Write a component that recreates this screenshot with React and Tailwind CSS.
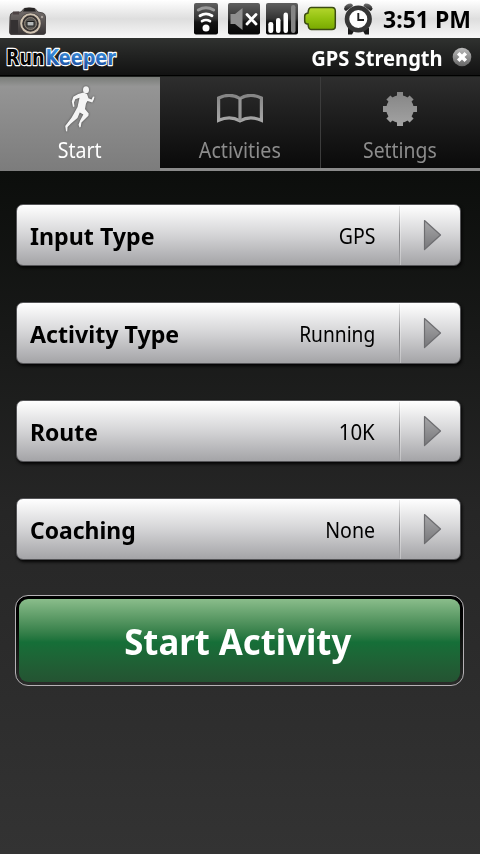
import React from "react";

function Camera() {
  return (
    <svg width="38" height="28" viewBox="0 0 38 28">
      <defs>
        <linearGradient id="cam" x1="0" y1="0" x2="0" y2="1">
          <stop offset="0" stopColor="#77716f" />
          <stop offset="0.5" stopColor="#5b5655" />
          <stop offset="1" stopColor="#383435" />
        </linearGradient>
      </defs>
      <path d="M1 10Q1 6 4 5.500L12 5L15 1.500Q20 0 26 1.500L29 5L34 6Q36.500 7 36.500 10V26Q36 27.500 34 27.500H2Q0.500 27 0.500 25Z" fill="url(#cam)" stroke="#3a3636" strokeWidth="0.8" />
      <path d="M16 1H25L27 4.500H14Z" fill="#252323" />
      <path d="M1.500 13H9V26.500H1.500Z" fill="#343132" />
      <path d="M4 4.500H10V7.500H4Z" fill="#4d4344" />
      <circle cx="21.500" cy="16.500" r="10.800" fill="#4a4544" />
      <circle cx="21.500" cy="16.500" r="9.300" fill="#353131" stroke="#cfc2b0" strokeWidth="2" />
      <circle cx="21.500" cy="16.500" r="6" fill="#5a5855" stroke="#8f8578" strokeWidth="1" />
      <rect x="18" y="14.500" width="7" height="4.500" fill="#b4b8b9" stroke="#1e1e1e" />
      <circle cx="33" cy="10" r="1.200" fill="#aaa29d" />
    </svg>
  );
}

function StatusIcons() {
  return (
    <svg width="184" height="38" viewBox="190 0 184 38">
      <defs>
        <linearGradient id="tile" x1="0" y1="0" x2="0" y2="1">
          <stop offset="0" stopColor="#606060" />
          <stop offset="0.5" stopColor="#333" />
          <stop offset="0.6" stopColor="#151515" />
          <stop offset="1" stopColor="#050505" />
        </linearGradient>
        <linearGradient id="bat" x1="0" y1="0" x2="0" y2="1">
          <stop offset="0" stopColor="#b4d62e" />
          <stop offset="0.5" stopColor="#93c210" />
          <stop offset="1" stopColor="#78a800" />
        </linearGradient>
        <linearGradient id="bell" x1="0" y1="0" x2="0" y2="1">
          <stop offset="0" stopColor="#707070" />
          <stop offset="1" stopColor="#171717" />
        </linearGradient>
      </defs>
      <rect x="194" y="3" width="24" height="31.500" rx="2" fill="url(#tile)" />
      <g fill="none" strokeLinecap="round">
        <path d="M198.300 10Q206 5.500 213.700 10" stroke="#999" strokeWidth="3" />
        <path d="M200 15.800Q206 12 212 15.800" stroke="#fff" strokeWidth="2.800" />
        <path d="M202 21.200Q206 18.700 210 21.200" stroke="#fff" strokeWidth="2.600" />
      </g>
      <circle cx="206" cy="28" r="3.500" fill="#fff" />
      <rect x="228" y="3" width="32" height="31.500" rx="2" fill="url(#tile)" />
      <path d="M230.500 14H235L242.500 8V30L235 24H230.500Z" fill="#8f8f8f" />
      <path d="M247 14.500L256 24M256 14.500L247 24" stroke="#fff" strokeWidth="2.800" strokeLinecap="round" />
      <rect x="266" y="3" width="32" height="31.500" rx="2" fill="url(#tile)" />
      <rect x="268.300" y="22" width="5" height="11" rx="2.300" fill="#fff" />
      <rect x="276" y="18" width="4.500" height="15" rx="2.200" fill="#fff" />
      <rect x="283.500" y="12.500" width="4.500" height="20.500" rx="2.200" fill="#fff" />
      <rect x="291" y="5" width="4.500" height="28" rx="2.200" fill="#858585" />
      <path d="M311 7.500H332Q335.300 7.500 335.300 11V26.500Q335.300 29.500 332 29.500H311Q308.500 29.500 308 24H307Q304.700 23.500 304.700 21V16Q304.700 13.500 308 13Q308.500 7.500 311 7.500Z" fill="url(#bat)" stroke="#3c4c12" strokeWidth="1.500" />
      <g fill="url(#bell)">
        <path d="M344 8.500Q345.500 3.500 351 3.500Q353 4 353 6L346 11Q344 10 344 8.500Z" />
        <path d="M372.500 8.500Q371 3.500 365.500 3.500Q363.500 4 363.500 6L370.500 11Q372.500 10 372.500 8.500Z" />
        <path d="M348 28H369V34.500H365L363 31H354L352 34.500H348Z" fill="#191919" />
      </g>
      <circle cx="358.300" cy="19" r="11.300" fill="#fff" stroke="#363636" strokeWidth="4.600" />
      <path d="M358.300 13V20H364" fill="none" stroke="#222" strokeWidth="1.900" />
    </svg>
  );
}

function Logo() {
  return (
    <svg width="120" height="34" viewBox="3 0 120 34" strokeLinejoin="round">
      <defs>
        <linearGradient id="keeper" gradientUnits="userSpaceOnUse" x1="0" y1="10" x2="0" y2="28">
          <stop offset="0" stopColor="#3c93e0" />
          <stop offset="1" stopColor="#1b4a9c" />
        </linearGradient>
      </defs>
      <g fontFamily="'DejaVu Sans'" fontSize="21" fontWeight="700" stroke="#fff" strokeWidth="2.400" paintOrder="stroke">
        <text transform="translate(6 25) scale(0.84 1)" fill="#050505">Run</text>
        <text transform="translate(45.500 0) scale(0.84 1)" y="25" fill="url(#keeper)">Keeper</text>
      </g>
    </svg>
  );
}

function CloseBadge() {
  return (
    <svg width="20" height="20" viewBox="0 0 20 20">
      <defs>
        <linearGradient id="badge" x1="0" y1="0" x2="0" y2="1">
          <stop offset="0" stopColor="#bcbcbc" />
          <stop offset="1" stopColor="#656565" />
        </linearGradient>
      </defs>
      <circle cx="10" cy="10" r="9.300" fill="url(#badge)" />
      <path d="M6.200 6.200L13.800 13.800M13.800 6.200L6.200 13.800" stroke="#fff" strokeWidth="3.600" />
    </svg>
  );
}

function Runner() {
  return (
    <svg width="32" height="48" viewBox="64 85 32 48" className="drop-shadow-[0_0_1px_#444]">
      <g fill="#f4f4f4">
        <ellipse cx="86" cy="89.800" rx="3" ry="3.500" />
        <path d="M83.500 92.500L87 94L88.500 98.200L91.500 99.600L93 96.500L94.500 96.800L93.800 99.500L92.300 102.600L87.500 101L86 103.500L85 109L88.700 113.500L88.400 115.800L81.500 122.500L80.700 127L79.500 127.500L78.500 124.800L80 120.800L83.300 114.500L79.800 112.500L77.500 118L71 123.500L67.600 127L67.200 131.500L66 131.300L65.200 126L71.500 117.700L74.800 112L77.500 107L79.500 97.800L75.300 99.200L74 102.500L74.500 106.500L73 107L71.800 101.500L73.300 96.800Q78 93.500 83.500 92.500Z" />
      </g>
    </svg>
  );
}

function Book() {
  return (
    <svg width="48" height="30" viewBox="216 94 48 30">
      <defs>
        <linearGradient id="book" x1="0" y1="0" x2="0" y2="1">
          <stop offset="0" stopColor="#858585" />
          <stop offset="1" stopColor="#a6a6a6" />
        </linearGradient>
      </defs>
      <path d="M218.600 98Q230 92.500 240 98.500Q250 92.500 261.400 98V120.300Q250 115 240 120.800Q230 115 218.600 120.300Z" fill="none" stroke="url(#book)" strokeWidth="3.200" />
      <rect x="238.400" y="98" width="3.200" height="23" fill="#959595" />
    </svg>
  );
}

function Gear() {
  return (
    <svg width="36" height="36" viewBox="-18 -18 36 36">
      <defs>
        <linearGradient id="gear" gradientUnits="userSpaceOnUse" x1="0" y1="-17" x2="0" y2="17">
          <stop offset="0" stopColor="#858585" />
          <stop offset="1" stopColor="#a3a3a3" />
        </linearGradient>
      </defs>
      <circle r="13.700" fill="url(#gear)" />
      <g fill="url(#gear)">
        <rect x="-17" y="-3" width="34" height="6" />
        <rect x="-3" y="-17" width="6" height="34" />
        <path d="M-13.600 -9.600L-9.600 -13.600L13.600 9.600L9.600 13.600Z" />
        <path d="M13.600 -9.600L9.600 -13.600L-13.600 9.600L-9.600 13.600Z" />
      </g>
    </svg>
  );
}

function Row({ label, value, labelScale, valueScale }) {
  return (
    <div className="flex h-[62px] w-[445px] rounded-[7px] border border-[#555558] bg-linear-to-b from-[#fff] via-[#d4d4d6] to-[#a4a4a7] shadow-[1px_2px_3px_#050505]">
      <div className="flex flex-1 items-center justify-between pr-6 pl-[13px] text-black">
        <span className={"origin-left pt-0.5 text-2xl leading-[58px] font-bold whitespace-nowrap " + labelScale}>{label}</span>
        <span className={"origin-right text-[22px] leading-[60px] whitespace-nowrap " + valueScale}>{value}</span>
      </div>
      <div className="my-px w-px bg-linear-to-b from-[#e8e8e8] via-[#858588] to-[#a0a0a3]" />
      <div className="w-px bg-white/30" />
      <div className="flex w-[59px] items-center pl-[22px]">
        <svg width="20" height="34" viewBox="0 0 20 34">
          <defs>
            <linearGradient id="arrow" x1="0" y1="0" x2="0" y2="1">
              <stop offset="0" stopColor="#a8a8aa" />
              <stop offset="1" stopColor="#77777a" />
            </linearGradient>
          </defs>
          <path d="M1.500 2.500L17.500 17L1.500 31.500Z" fill="url(#arrow)" stroke="#6d6d70" strokeWidth="1.200" strokeLinejoin="round" />
        </svg>
      </div>
    </div>
  );
}

export default function App() {
  return (
    <div className="flex h-[854px] w-[480px] flex-col overflow-hidden bg-black font-['Noto_Sans','Open_Sans',sans-serif]">
      <div className="flex h-[38px] shrink-0 bg-linear-to-b from-white via-[#dedede] to-[#f8f8f8]">
        <div className="w-[190px] pt-[7px] pl-[9px]"><Camera /></div>
        <StatusIcons />
        <span className="ml-[9px] origin-left scale-x-[0.96] text-2xl leading-[38px] font-bold whitespace-nowrap text-black">3:51 PM</span>
      </div>
      <div className="flex h-[38px] shrink-0 items-center border-b border-black bg-linear-to-b from-[#303230] to-[#121212] pl-[3px]">
        <Logo />
        <div className="flex-1" />
        <span className="mr-[9px] origin-right scale-x-[0.915] text-[22px] leading-[36px] font-bold whitespace-nowrap text-white">GPS Strength</span>
        <div className="mr-2 pt-px"><CloseBadge /></div>
      </div>
      <div className="flex h-[95px] shrink-0 border-t border-[#202220] bg-[#8a8a8a]">
        <div className="flex w-40 flex-col items-center bg-linear-to-b from-[#7a7d79] via-[#959595] via-10% to-[#7c7c7c] pt-[8px] text-white">
          <div className="h-[51px]"><Runner /></div>
          <span className="scale-x-[0.89] text-[22px] leading-[26px]">Start</span>
        </div>
        <div className="mb-[3px] flex w-[161px] flex-col items-center border-r border-[#3c3c3c] bg-linear-to-b from-[#2e2e2e] to-[#0a0a0a] pt-[17px] text-[#8c8c8c]">
          <div className="h-[42px]"><Book /></div>
          <span className="scale-x-[0.895] text-[22px] leading-[26px]">Activities</span>
        </div>
        <div className="mb-[3px] flex flex-1 flex-col items-center bg-linear-to-b from-[#2e2e2e] to-[#0a0a0a] pt-[14px] pr-px text-[#8c8c8c]">
          <div className="h-[45px]"><Gear /></div>
          <span className="scale-x-[0.88] text-[22px] leading-[26px]">Settings</span>
        </div>
      </div>
      <div className="flex flex-1 flex-col bg-linear-to-b from-[#0c0e0c] via-[#262626] to-[#333] pt-[33px] pl-4">
        <div className="flex flex-col gap-9">
          <Row label="Input Type" value="GPS" labelScale="scale-x-[0.966]" valueScale="scale-x-[0.885]" />
          <Row label="Activity Type" value="Running" labelScale="scale-x-[0.966]" valueScale="scale-x-[0.872]" />
          <Row label="Route" value="10K" labelScale="scale-x-[0.955]" valueScale="scale-x-[0.93]" />
          <Row label="Coaching" value="None" labelScale="scale-x-[0.955]" valueScale="scale-x-[0.89]" />
        </div>
        <div className="mt-[35px] -ml-px h-[91px] w-[449px] rounded-[13px] border border-[#b5b1b5] bg-linear-to-b from-black via-[#101210] to-[#2a2c2a] p-[3px]">
          <div className="flex h-[83px] items-center justify-center rounded-[9px] bg-linear-to-b from-[#8abd8b] from-0% via-[#156f38] via-52% to-[#245332] to-100% pt-0.5 pr-[3px]">
            <span className="scale-x-[0.964] text-4xl font-bold whitespace-nowrap text-white">Start Activity</span>
          </div>
        </div>
      </div>
    </div>
  );
}
